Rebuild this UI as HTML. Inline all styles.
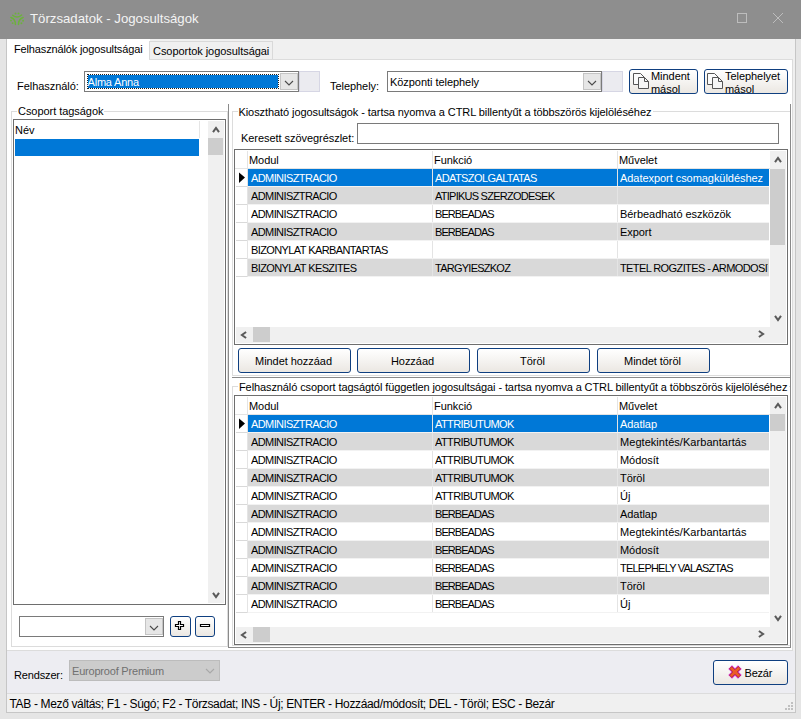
<!DOCTYPE html>
<html><head><meta charset="utf-8"><style>
html,body{margin:0;padding:0;}
body{width:801px;height:719px;overflow:hidden;position:relative;background:#e5e5e5;font-family:"Liberation Sans",sans-serif;}
div,span,svg{position:absolute;}
.t{font-size:11px;line-height:13px;white-space:pre;color:#000;letter-spacing:-0.05px}
.u{letter-spacing:-0.6px}
.w{color:#fff}
</style></head><body>

<div style="left:0px;top:0px;width:801px;height:39px;background:#8e8e8e"></div>
<svg style="left:6px;top:8px" width="22" height="22" viewBox="6 8 22 22">
<g fill="none" stroke="#6cb23c" stroke-width="1.5" stroke-linecap="round">
<path d="M12.7,15.2 Q17,19 21.6,15"/>
<path d="M10.9,17.5 Q15.5,19 15.4,24.5"/>
<path d="M23.1,17.5 Q18.5,19 18.5,24.5"/>
</g>
<g fill="#6cb23c"><circle cx="15.5" cy="13.5" r="0.95"/><circle cx="18.5" cy="13.5" r="0.95"/><circle cx="11" cy="20.6" r="0.95"/><circle cx="23.1" cy="20.7" r="0.95"/><circle cx="12.6" cy="23.1" r="0.95"/><circle cx="21.4" cy="23.3" r="0.95"/></g>
</svg>
<span class="t" style="left:30px;top:10px;font-size:13.2px;line-height:17px;color:#f4f4f4;letter-spacing:0px">Törzsadatok - Jogosultságok</span>
<div style="left:737px;top:13px;width:10px;height:10px;border:1px solid #bdbdbd;box-sizing:border-box;"></div>
<svg style="left:772px;top:12px" width="12" height="12" viewBox="0 0 12 12"><path d="M1,1 L11,11 M11,1 L1,11" stroke="#bdbdbd" stroke-width="1"/></svg>
<div style="left:6px;top:39px;width:1px;height:674px;background:#c6c6c6"></div>
<div style="left:795px;top:39px;width:1px;height:674px;background:#c6c6c6"></div>
<div style="left:6px;top:712px;width:790px;height:1px;background:#c6c6c6"></div>
<div style="left:7px;top:39px;width:788px;height:673px;background:#f0f0f0"></div>
<div style="left:7px;top:39px;width:143px;height:22px;background:#ffffff"></div>
<div style="left:149px;top:41px;width:124px;height:18px;background:#f0f0f0;border:1px solid #d9d9d9;border-bottom:none;box-sizing:border-box"></div>
<span class="t " style="left:14px;top:43px;letter-spacing:-0.14px">Felhasználók jogosultságai</span>
<span class="t " style="left:153px;top:45px;">Csoportok jogosultságai</span>
<div style="left:7px;top:60px;width:786px;height:591px;background:#ffffff"></div>
<div style="left:149px;top:59px;width:644px;height:1px;background:#dcdcdc"></div>
<div style="left:792px;top:59px;width:1px;height:592px;background:#dcdcdc"></div>
<div style="left:7px;top:650px;width:786px;height:1px;background:#dcdcdc"></div>
<span class="t " style="left:17px;top:80px;">Felhasználó:</span>
<div style="left:84px;top:71px;width:215px;height:21px;border:1px solid #7a7a7a;box-sizing:border-box;background:#ffffff;"></div>
<div style="left:88px;top:75px;width:190px;height:13px;background:#0078d7"></div>
<div style="left:87px;top:74px;width:192px;height:15px;border:1px dotted #202020;box-sizing:border-box"></div>
<span class="t w" style="left:87.5px;top:76px;letter-spacing:-0.2px">Alma Anna</span>
<div style="left:280px;top:73px;width:18px;height:17px;border:1px solid #c4c4c4;box-sizing:border-box;background:#e6e6e6;"></div>
<svg style="position:absolute;left:280.5px;top:74.5px" width="16" height="16" viewBox="-8 -8 16 16"><path d="M-4,-2 L0,2 L4,-2" fill="none" stroke="#4a4a4a" stroke-width="1.1"/></svg>
<div style="left:299px;top:71px;width:21px;height:21px;border:1px solid #d6d6e4;box-sizing:border-box;background:#ebebf0;"></div>
<span class="t " style="left:330px;top:80px;">Telephely:</span>
<div style="left:387px;top:71px;width:215px;height:21px;border:1px solid #7a7a7a;box-sizing:border-box;background:#ffffff;"></div>
<span class="t " style="left:390px;top:76px;">Központi telephely</span>
<div style="left:583px;top:73px;width:18px;height:17px;border:1px solid #c4c4c4;box-sizing:border-box;background:#e6e6e6;"></div>
<svg style="position:absolute;left:583.5px;top:74.5px" width="16" height="16" viewBox="-8 -8 16 16"><path d="M-4,-2 L0,2 L4,-2" fill="none" stroke="#4a4a4a" stroke-width="1.1"/></svg>
<div style="left:602px;top:71px;width:21px;height:21px;border:1px solid #d6d6e4;box-sizing:border-box;background:#ebebf0;"></div>
<div style="left:629px;top:69px;width:69px;height:25px;border:1px solid #0f3f80;border-radius:3px;box-sizing:border-box;background:linear-gradient(#ffffff,#f3f1ee 60%,#ebe7e2)"></div>
<svg style="left:633px;top:73px" width="17" height="17" viewBox="0 0 17 17">
<path d="M0.5,0.5 H7.5 L11.5,4.5 V11.5 H0.5 Z" fill="#fbfbfb" stroke="#555" stroke-width="1"/>
<path d="M5.5,4.5 H11.5 L15.5,8.5 V15.5 H5.5 Z" fill="#f6f6f6" stroke="#555" stroke-width="1"/>
<path d="M11.5,4.5 V8.5 H15.5" fill="none" stroke="#555" stroke-width="1"/>
</svg>
<div style="left:630px;top:70px;width:66px;height:23px;overflow:hidden"><span class="t" style="left:21px;top:0px;line-height:12px">Mindent</span><span class="t" style="left:21px;top:13px;line-height:12px">másol</span></div>
<div style="left:704px;top:69px;width:84px;height:25px;border:1px solid #0f3f80;border-radius:3px;box-sizing:border-box;background:linear-gradient(#ffffff,#f3f1ee 60%,#ebe7e2)"></div>
<svg style="left:707px;top:73px" width="17" height="17" viewBox="0 0 17 17">
<path d="M0.5,0.5 H7.5 L11.5,4.5 V11.5 H0.5 Z" fill="#fbfbfb" stroke="#555" stroke-width="1"/>
<path d="M5.5,4.5 H11.5 L15.5,8.5 V15.5 H5.5 Z" fill="#f6f6f6" stroke="#555" stroke-width="1"/>
<path d="M11.5,4.5 V8.5 H15.5" fill="none" stroke="#555" stroke-width="1"/>
</svg>
<div style="left:705px;top:70px;width:81px;height:23px;overflow:hidden"><span class="t" style="left:20px;top:0px;line-height:12px">Telephelyet</span><span class="t" style="left:20px;top:13px;line-height:12px">másol</span></div>
<div style="left:11px;top:111px;width:217px;height:1px;background:#dcdcdc"></div>
<div style="left:11px;top:111px;width:1px;height:536px;background:#dcdcdc"></div>
<div style="left:227px;top:111px;width:1px;height:536px;background:#dcdcdc"></div>
<div style="left:11px;top:646px;width:217px;height:1px;background:#dcdcdc"></div>
<div style="left:17px;top:104px;width:87px;height:14px;background:#ffffff"></div>
<span class="t " style="left:18px;top:105px;">Csoport tagságok</span>
<div style="left:13px;top:119px;width:213px;height:486px;border:1px solid #6e6e6e;box-sizing:border-box;background:#ffffff;"></div>
<div style="left:199px;top:121px;width:1px;height:17px;background:#e5e5e5"></div>
<span class="t " style="left:15px;top:124px;">Név</span>
<div style="left:15px;top:139px;width:184px;height:17px;background:#0078d7"></div>
<div style="left:208px;top:121px;width:16px;height:482px;background:#f0f0f0"></div>
<svg style="position:absolute;left:207.5px;top:122px" width="16" height="16" viewBox="-8 -8 16 16"><path d="M-3,2.1 L0,-2.1 L3,2.1" fill="none" stroke="#5a5a5a" stroke-width="2"/></svg>
<div style="left:208px;top:138px;width:15px;height:17px;background:#cdcdcd"></div>
<svg style="position:absolute;left:207.5px;top:587px" width="16" height="16" viewBox="-8 -8 16 16"><path d="M-3,-2.1 L0,2.1 L3,-2.1" fill="none" stroke="#5a5a5a" stroke-width="2"/></svg>
<div style="left:19px;top:616px;width:145px;height:21px;border:1px solid #7a7a7a;box-sizing:border-box;background:#ffffff;"></div>
<div style="left:145px;top:618px;width:18px;height:17px;border:1px solid #c4c4c4;box-sizing:border-box;background:#e6e6e6;"></div>
<svg style="position:absolute;left:145.5px;top:619.5px" width="16" height="16" viewBox="-8 -8 16 16"><path d="M-4,-2 L0,2 L4,-2" fill="none" stroke="#4a4a4a" stroke-width="1.1"/></svg>
<div style="left:170px;top:616px;width:21px;height:21px;border:1px solid #0f3f80;border-radius:3px;box-sizing:border-box;background:linear-gradient(#ffffff,#f3f1ee 60%,#ebe7e2)"></div>
<svg style="left:174px;top:620px" width="12" height="12" viewBox="0 0 12 12"><path d="M4.5,1.5 H6.5 V4.5 H9.5 V6.5 H6.5 V9.5 H4.5 V6.5 H1.5 V4.5 H4.5 Z" fill="#fff" stroke="#000" stroke-width="1.2"/></svg>
<div style="left:195px;top:616px;width:20px;height:21px;border:1px solid #0f3f80;border-radius:3px;box-sizing:border-box;background:linear-gradient(#ffffff,#f3f1ee 60%,#ebe7e2)"></div>
<svg style="left:199px;top:620px" width="12" height="12" viewBox="0 0 12 12"><path d="M1.5,4.5 H10.5 V6.5 H1.5 Z" fill="#fff" stroke="#000" stroke-width="1.2"/></svg>
<div style="left:228px;top:104px;width:1px;height:544px;background:#8a8a8a"></div>
<div style="left:790px;top:104px;width:1px;height:544px;background:#8a8a8a"></div>
<div style="left:228px;top:647px;width:563px;height:1px;background:#8a8a8a"></div>
<div style="left:232px;top:111px;width:558px;height:1px;background:#dcdcdc"></div>
<div style="left:232px;top:111px;width:1px;height:265px;background:#dcdcdc"></div>
<div style="left:232px;top:375px;width:558px;height:1px;background:#dcdcdc"></div>
<div style="left:232px;top:377px;width:559px;height:1px;background:#8a8a8a"></div>
<div style="left:238px;top:104px;width:415px;height:14px;background:#ffffff"></div>
<span class="t " style="left:238.5px;top:106px;letter-spacing:-0.08px">Kiosztható jogosultságok - tartsa nyomva a CTRL billentyűt a többszörös kijelöléséhez</span>
<span class="t " style="left:241px;top:132px;">Keresett szövegrészlet:</span>
<div style="left:357px;top:123px;width:422px;height:21px;border:1px solid #7a7a7a;box-sizing:border-box;background:#ffffff;"></div>
<div style="left:234px;top:149px;width:554px;height:196px;border:1px solid #6e6e6e;box-sizing:border-box;background:#ffffff;"></div>
<div style="left:235px;top:168px;width:535px;height:1px;background:#e4e4e4"></div>
<div style="left:247px;top:151px;width:1px;height:126px;background:#e4e4e4"></div>
<div style="left:432px;top:151px;width:1px;height:126px;background:#e4e4e4"></div>
<div style="left:617px;top:151px;width:1px;height:126px;background:#e4e4e4"></div>
<span class="t " style="left:249px;top:154px;">Modul</span>
<span class="t " style="left:434px;top:154px;">Funkció</span>
<span class="t " style="left:619px;top:154px;">Művelet</span>
<div style="left:248px;top:169px;width:184px;height:17px;background:#0078d7"></div>
<div style="left:433px;top:169px;width:184px;height:17px;background:#0078d7"></div>
<div style="left:618px;top:169px;width:151px;height:17px;background:#0078d7"></div>
<div style="left:248px;top:186px;width:521px;height:1px;background:#f2f2f2"></div>
<div style="left:236px;top:186px;width:11px;height:1px;background:#d9d9d9"></div>
<svg style="left:238px;top:172px" width="8" height="12" viewBox="0 0 8 12"><path d="M1,0.5 L7,5.5 L1,11 Z" fill="#000"/></svg>
<div style="left:251px;top:169px;width:180px;height:17px;overflow:hidden"><span class="t w u" style="left:0px;top:3px;">ADMINISZTRACIO</span></div>
<div style="left:435px;top:169px;width:181px;height:17px;overflow:hidden"><span class="t w u" style="left:0px;top:3px;">ADATSZOLGALTATAS</span></div>
<div style="left:620px;top:169px;width:148px;height:17px;overflow:hidden"><span class="t w" style="left:0px;top:3px;">Adatexport csomagküldéshez</span></div>
<div style="left:248px;top:187px;width:184px;height:17px;background:#d9d9d9"></div>
<div style="left:433px;top:187px;width:184px;height:17px;background:#d9d9d9"></div>
<div style="left:618px;top:187px;width:151px;height:17px;background:#d9d9d9"></div>
<div style="left:248px;top:204px;width:521px;height:1px;background:#f2f2f2"></div>
<div style="left:236px;top:204px;width:11px;height:1px;background:#d9d9d9"></div>
<div style="left:251px;top:187px;width:180px;height:17px;overflow:hidden"><span class="t  u" style="left:0px;top:3px;">ADMINISZTRACIO</span></div>
<div style="left:435px;top:187px;width:181px;height:17px;overflow:hidden"><span class="t  u" style="left:0px;top:3px;letter-spacing:-0.75px;">ATIPIKUS SZERZODESEK</span></div>
<div style="left:248px;top:222px;width:521px;height:1px;background:#f2f2f2"></div>
<div style="left:236px;top:222px;width:11px;height:1px;background:#d9d9d9"></div>
<div style="left:251px;top:205px;width:180px;height:17px;overflow:hidden"><span class="t  u" style="left:0px;top:3px;">ADMINISZTRACIO</span></div>
<div style="left:435px;top:205px;width:181px;height:17px;overflow:hidden"><span class="t  u" style="left:0px;top:3px;letter-spacing:-0.95px;">BERBEADAS</span></div>
<div style="left:620px;top:205px;width:148px;height:17px;overflow:hidden"><span class="t " style="left:0px;top:3px;">Bérbeadható eszközök</span></div>
<div style="left:248px;top:223px;width:184px;height:17px;background:#d9d9d9"></div>
<div style="left:433px;top:223px;width:184px;height:17px;background:#d9d9d9"></div>
<div style="left:618px;top:223px;width:151px;height:17px;background:#d9d9d9"></div>
<div style="left:248px;top:240px;width:521px;height:1px;background:#f2f2f2"></div>
<div style="left:236px;top:240px;width:11px;height:1px;background:#d9d9d9"></div>
<div style="left:251px;top:223px;width:180px;height:17px;overflow:hidden"><span class="t  u" style="left:0px;top:3px;">ADMINISZTRACIO</span></div>
<div style="left:435px;top:223px;width:181px;height:17px;overflow:hidden"><span class="t  u" style="left:0px;top:3px;letter-spacing:-0.95px;">BERBEADAS</span></div>
<div style="left:620px;top:223px;width:148px;height:17px;overflow:hidden"><span class="t " style="left:0px;top:3px;">Export</span></div>
<div style="left:248px;top:258px;width:521px;height:1px;background:#f2f2f2"></div>
<div style="left:236px;top:258px;width:11px;height:1px;background:#d9d9d9"></div>
<div style="left:251px;top:241px;width:180px;height:17px;overflow:hidden"><span class="t  u" style="left:0px;top:3px;">BIZONYLAT KARBANTARTAS</span></div>
<div style="left:248px;top:259px;width:184px;height:17px;background:#d9d9d9"></div>
<div style="left:433px;top:259px;width:184px;height:17px;background:#d9d9d9"></div>
<div style="left:618px;top:259px;width:151px;height:17px;background:#d9d9d9"></div>
<div style="left:248px;top:276px;width:521px;height:1px;background:#f2f2f2"></div>
<div style="left:236px;top:276px;width:11px;height:1px;background:#d9d9d9"></div>
<div style="left:251px;top:259px;width:180px;height:17px;overflow:hidden"><span class="t  u" style="left:0px;top:3px;">BIZONYLAT KESZITES</span></div>
<div style="left:435px;top:259px;width:181px;height:17px;overflow:hidden"><span class="t  u" style="left:0px;top:3px;letter-spacing:-0.75px;">TARGYIESZKOZ</span></div>
<div style="left:620px;top:259px;width:148px;height:17px;overflow:hidden"><span class="t  u" style="left:0px;top:3px;">TETEL ROGZITES - ARMODOSITAS</span></div>
<div style="left:770px;top:151px;width:16px;height:176px;background:#f0f0f0"></div>
<svg style="position:absolute;left:769.5px;top:152px" width="16" height="16" viewBox="-8 -8 16 16"><path d="M-3,2.1 L0,-2.1 L3,2.1" fill="none" stroke="#5a5a5a" stroke-width="2"/></svg>
<div style="left:770px;top:169px;width:15px;height:76px;background:#cdcdcd"></div>
<svg style="position:absolute;left:769.5px;top:309.5px" width="16" height="16" viewBox="-8 -8 16 16"><path d="M-3,-2.1 L0,2.1 L3,-2.1" fill="none" stroke="#5a5a5a" stroke-width="2"/></svg>
<div style="left:236px;top:327px;width:550px;height:16px;background:#f0f0f0"></div>
<svg style="position:absolute;left:236px;top:326.5px" width="16" height="16" viewBox="-8 -8 16 16"><path d="M2.1,-3 L-2.1,0 L2.1,3" fill="none" stroke="#5a5a5a" stroke-width="2"/></svg>
<div style="left:253px;top:327px;width:17px;height:15px;background:#cdcdcd"></div>
<svg style="position:absolute;left:753px;top:326px" width="16" height="16" viewBox="-8 -8 16 16"><path d="M-2.1,-3 L2.1,0 L-2.1,3" fill="none" stroke="#5a5a5a" stroke-width="2"/></svg>
<div style="left:238px;top:348px;width:113px;height:25px;border:1px solid #0f3f80;border-radius:3px;box-sizing:border-box;background:linear-gradient(#ffffff,#f3f1ee 60%,#ebe7e2)"></div>
<div class="t" style="left:237px;top:355px;width:113px;text-align:center">Mindet hozzáad</div>
<div style="left:357px;top:348px;width:113px;height:25px;border:1px solid #0f3f80;border-radius:3px;box-sizing:border-box;background:linear-gradient(#ffffff,#f3f1ee 60%,#ebe7e2)"></div>
<div class="t" style="left:356px;top:355px;width:113px;text-align:center">Hozzáad</div>
<div style="left:477px;top:348px;width:113px;height:25px;border:1px solid #0f3f80;border-radius:3px;box-sizing:border-box;background:linear-gradient(#ffffff,#f3f1ee 60%,#ebe7e2)"></div>
<div class="t" style="left:476px;top:355px;width:113px;text-align:center">Töröl</div>
<div style="left:597px;top:348px;width:113px;height:25px;border:1px solid #0f3f80;border-radius:3px;box-sizing:border-box;background:linear-gradient(#ffffff,#f3f1ee 60%,#ebe7e2)"></div>
<div class="t" style="left:596px;top:355px;width:113px;text-align:center">Mindet töröl</div>
<div style="left:232px;top:386px;width:558px;height:1px;background:#dcdcdc"></div>
<div style="left:232px;top:386px;width:1px;height:260px;background:#dcdcdc"></div>
<div style="left:232px;top:645px;width:558px;height:1px;background:#dcdcdc"></div>
<div style="left:238px;top:380px;width:551px;height:14px;background:#ffffff"></div>
<span class="t " style="left:239px;top:381px;letter-spacing:-0.1px">Felhasználó csoport tagságtól független jogosultságai - tartsa nyomva a CTRL billentyűt a többszörös kijelöléséhez</span>
<div style="left:234px;top:395px;width:554px;height:250px;border:1px solid #6e6e6e;box-sizing:border-box;background:#ffffff;"></div>
<div style="left:235px;top:414px;width:535px;height:1px;background:#e4e4e4"></div>
<div style="left:247px;top:397px;width:1px;height:216px;background:#e4e4e4"></div>
<div style="left:432px;top:397px;width:1px;height:216px;background:#e4e4e4"></div>
<div style="left:617px;top:397px;width:1px;height:216px;background:#e4e4e4"></div>
<span class="t " style="left:249px;top:400px;">Modul</span>
<span class="t " style="left:434px;top:400px;">Funkció</span>
<span class="t " style="left:619px;top:400px;">Művelet</span>
<div style="left:248px;top:415px;width:184px;height:17px;background:#0078d7"></div>
<div style="left:433px;top:415px;width:184px;height:17px;background:#0078d7"></div>
<div style="left:618px;top:415px;width:151px;height:17px;background:#0078d7"></div>
<div style="left:248px;top:432px;width:521px;height:1px;background:#f2f2f2"></div>
<div style="left:236px;top:432px;width:11px;height:1px;background:#d9d9d9"></div>
<svg style="left:238px;top:418px" width="8" height="12" viewBox="0 0 8 12"><path d="M1,0.5 L7,5.5 L1,11 Z" fill="#000"/></svg>
<div style="left:251px;top:415px;width:180px;height:17px;overflow:hidden"><span class="t w u" style="left:0px;top:3px;">ADMINISZTRACIO</span></div>
<div style="left:435px;top:415px;width:181px;height:17px;overflow:hidden"><span class="t w u" style="left:0px;top:3px;">ATTRIBUTUMOK</span></div>
<div style="left:620px;top:415px;width:148px;height:17px;overflow:hidden"><span class="t w" style="left:0px;top:3px;">Adatlap</span></div>
<div style="left:248px;top:433px;width:184px;height:17px;background:#d9d9d9"></div>
<div style="left:433px;top:433px;width:184px;height:17px;background:#d9d9d9"></div>
<div style="left:618px;top:433px;width:151px;height:17px;background:#d9d9d9"></div>
<div style="left:248px;top:450px;width:521px;height:1px;background:#f2f2f2"></div>
<div style="left:236px;top:450px;width:11px;height:1px;background:#d9d9d9"></div>
<div style="left:251px;top:433px;width:180px;height:17px;overflow:hidden"><span class="t  u" style="left:0px;top:3px;">ADMINISZTRACIO</span></div>
<div style="left:435px;top:433px;width:181px;height:17px;overflow:hidden"><span class="t  u" style="left:0px;top:3px;">ATTRIBUTUMOK</span></div>
<div style="left:620px;top:433px;width:148px;height:17px;overflow:hidden"><span class="t " style="left:0px;top:3px;letter-spacing:0.05px;">Megtekintés/Karbantartás</span></div>
<div style="left:248px;top:468px;width:521px;height:1px;background:#f2f2f2"></div>
<div style="left:236px;top:468px;width:11px;height:1px;background:#d9d9d9"></div>
<div style="left:251px;top:451px;width:180px;height:17px;overflow:hidden"><span class="t  u" style="left:0px;top:3px;">ADMINISZTRACIO</span></div>
<div style="left:435px;top:451px;width:181px;height:17px;overflow:hidden"><span class="t  u" style="left:0px;top:3px;">ATTRIBUTUMOK</span></div>
<div style="left:620px;top:451px;width:148px;height:17px;overflow:hidden"><span class="t " style="left:0px;top:3px;">Módosít</span></div>
<div style="left:248px;top:469px;width:184px;height:17px;background:#d9d9d9"></div>
<div style="left:433px;top:469px;width:184px;height:17px;background:#d9d9d9"></div>
<div style="left:618px;top:469px;width:151px;height:17px;background:#d9d9d9"></div>
<div style="left:248px;top:486px;width:521px;height:1px;background:#f2f2f2"></div>
<div style="left:236px;top:486px;width:11px;height:1px;background:#d9d9d9"></div>
<div style="left:251px;top:469px;width:180px;height:17px;overflow:hidden"><span class="t  u" style="left:0px;top:3px;">ADMINISZTRACIO</span></div>
<div style="left:435px;top:469px;width:181px;height:17px;overflow:hidden"><span class="t  u" style="left:0px;top:3px;">ATTRIBUTUMOK</span></div>
<div style="left:620px;top:469px;width:148px;height:17px;overflow:hidden"><span class="t " style="left:0px;top:3px;">Töröl</span></div>
<div style="left:248px;top:504px;width:521px;height:1px;background:#f2f2f2"></div>
<div style="left:236px;top:504px;width:11px;height:1px;background:#d9d9d9"></div>
<div style="left:251px;top:487px;width:180px;height:17px;overflow:hidden"><span class="t  u" style="left:0px;top:3px;">ADMINISZTRACIO</span></div>
<div style="left:435px;top:487px;width:181px;height:17px;overflow:hidden"><span class="t  u" style="left:0px;top:3px;">ATTRIBUTUMOK</span></div>
<div style="left:620px;top:487px;width:148px;height:17px;overflow:hidden"><span class="t " style="left:0px;top:3px;">Új</span></div>
<div style="left:248px;top:505px;width:184px;height:17px;background:#d9d9d9"></div>
<div style="left:433px;top:505px;width:184px;height:17px;background:#d9d9d9"></div>
<div style="left:618px;top:505px;width:151px;height:17px;background:#d9d9d9"></div>
<div style="left:248px;top:522px;width:521px;height:1px;background:#f2f2f2"></div>
<div style="left:236px;top:522px;width:11px;height:1px;background:#d9d9d9"></div>
<div style="left:251px;top:505px;width:180px;height:17px;overflow:hidden"><span class="t  u" style="left:0px;top:3px;">ADMINISZTRACIO</span></div>
<div style="left:435px;top:505px;width:181px;height:17px;overflow:hidden"><span class="t  u" style="left:0px;top:3px;letter-spacing:-0.95px;">BERBEADAS</span></div>
<div style="left:620px;top:505px;width:148px;height:17px;overflow:hidden"><span class="t " style="left:0px;top:3px;">Adatlap</span></div>
<div style="left:248px;top:540px;width:521px;height:1px;background:#f2f2f2"></div>
<div style="left:236px;top:540px;width:11px;height:1px;background:#d9d9d9"></div>
<div style="left:251px;top:523px;width:180px;height:17px;overflow:hidden"><span class="t  u" style="left:0px;top:3px;">ADMINISZTRACIO</span></div>
<div style="left:435px;top:523px;width:181px;height:17px;overflow:hidden"><span class="t  u" style="left:0px;top:3px;letter-spacing:-0.95px;">BERBEADAS</span></div>
<div style="left:620px;top:523px;width:148px;height:17px;overflow:hidden"><span class="t " style="left:0px;top:3px;letter-spacing:0.05px;">Megtekintés/Karbantartás</span></div>
<div style="left:248px;top:541px;width:184px;height:17px;background:#d9d9d9"></div>
<div style="left:433px;top:541px;width:184px;height:17px;background:#d9d9d9"></div>
<div style="left:618px;top:541px;width:151px;height:17px;background:#d9d9d9"></div>
<div style="left:248px;top:558px;width:521px;height:1px;background:#f2f2f2"></div>
<div style="left:236px;top:558px;width:11px;height:1px;background:#d9d9d9"></div>
<div style="left:251px;top:541px;width:180px;height:17px;overflow:hidden"><span class="t  u" style="left:0px;top:3px;">ADMINISZTRACIO</span></div>
<div style="left:435px;top:541px;width:181px;height:17px;overflow:hidden"><span class="t  u" style="left:0px;top:3px;letter-spacing:-0.95px;">BERBEADAS</span></div>
<div style="left:620px;top:541px;width:148px;height:17px;overflow:hidden"><span class="t " style="left:0px;top:3px;">Módosít</span></div>
<div style="left:248px;top:576px;width:521px;height:1px;background:#f2f2f2"></div>
<div style="left:236px;top:576px;width:11px;height:1px;background:#d9d9d9"></div>
<div style="left:251px;top:559px;width:180px;height:17px;overflow:hidden"><span class="t  u" style="left:0px;top:3px;">ADMINISZTRACIO</span></div>
<div style="left:435px;top:559px;width:181px;height:17px;overflow:hidden"><span class="t  u" style="left:0px;top:3px;letter-spacing:-0.95px;">BERBEADAS</span></div>
<div style="left:620px;top:559px;width:148px;height:17px;overflow:hidden"><span class="t  u" style="left:0px;top:3px;letter-spacing:-0.78px;">TELEPHELY VALASZTAS</span></div>
<div style="left:248px;top:577px;width:184px;height:17px;background:#d9d9d9"></div>
<div style="left:433px;top:577px;width:184px;height:17px;background:#d9d9d9"></div>
<div style="left:618px;top:577px;width:151px;height:17px;background:#d9d9d9"></div>
<div style="left:248px;top:594px;width:521px;height:1px;background:#f2f2f2"></div>
<div style="left:236px;top:594px;width:11px;height:1px;background:#d9d9d9"></div>
<div style="left:251px;top:577px;width:180px;height:17px;overflow:hidden"><span class="t  u" style="left:0px;top:3px;">ADMINISZTRACIO</span></div>
<div style="left:435px;top:577px;width:181px;height:17px;overflow:hidden"><span class="t  u" style="left:0px;top:3px;letter-spacing:-0.95px;">BERBEADAS</span></div>
<div style="left:620px;top:577px;width:148px;height:17px;overflow:hidden"><span class="t " style="left:0px;top:3px;">Töröl</span></div>
<div style="left:248px;top:612px;width:521px;height:1px;background:#f2f2f2"></div>
<div style="left:236px;top:612px;width:11px;height:1px;background:#d9d9d9"></div>
<div style="left:251px;top:595px;width:180px;height:17px;overflow:hidden"><span class="t  u" style="left:0px;top:3px;">ADMINISZTRACIO</span></div>
<div style="left:435px;top:595px;width:181px;height:17px;overflow:hidden"><span class="t  u" style="left:0px;top:3px;letter-spacing:-0.95px;">BERBEADAS</span></div>
<div style="left:620px;top:595px;width:148px;height:17px;overflow:hidden"><span class="t " style="left:0px;top:3px;">Új</span></div>
<div style="left:770px;top:397px;width:16px;height:230px;background:#f0f0f0"></div>
<svg style="position:absolute;left:769.5px;top:398px" width="16" height="16" viewBox="-8 -8 16 16"><path d="M-3,2.1 L0,-2.1 L3,2.1" fill="none" stroke="#5a5a5a" stroke-width="2"/></svg>
<div style="left:770px;top:414px;width:15px;height:17px;background:#cdcdcd"></div>
<svg style="position:absolute;left:769.5px;top:609.5px" width="16" height="16" viewBox="-8 -8 16 16"><path d="M-3,-2.1 L0,2.1 L3,-2.1" fill="none" stroke="#5a5a5a" stroke-width="2"/></svg>
<div style="left:236px;top:627px;width:550px;height:16px;background:#f0f0f0"></div>
<svg style="position:absolute;left:236px;top:626.5px" width="16" height="16" viewBox="-8 -8 16 16"><path d="M2.1,-3 L-2.1,0 L2.1,3" fill="none" stroke="#5a5a5a" stroke-width="2"/></svg>
<div style="left:253px;top:627px;width:17px;height:15px;background:#cdcdcd"></div>
<svg style="position:absolute;left:753px;top:626px" width="16" height="16" viewBox="-8 -8 16 16"><path d="M-2.1,-3 L2.1,0 L-2.1,3" fill="none" stroke="#5a5a5a" stroke-width="2"/></svg>
<div style="left:7px;top:651px;width:788px;height:42px;background:#ededf2"></div>
<span class="t " style="left:14px;top:669px;letter-spacing:-0.15px">Rendszer:</span>
<div style="left:69px;top:660px;width:151px;height:21px;border:1px solid #bcbcbc;box-sizing:border-box;background:#cccccc;"></div>
<span class="t " style="left:72px;top:665px;color:#707070;letter-spacing:-0.2px">Europroof Premium</span>
<svg style="position:absolute;left:201.5px;top:663px" width="16" height="16" viewBox="-8 -8 16 16"><path d="M-4,-2 L0,2 L4,-2" fill="none" stroke="#a8a8a8" stroke-width="1.1"/></svg>
<div style="left:713px;top:660px;width:75px;height:25px;border:1px solid #0f3f80;border-radius:3px;box-sizing:border-box;background:linear-gradient(#ffffff,#f3f1ee 60%,#ebe7e2)"></div>
<svg style="left:725.4px;top:662.3px" width="20" height="20" viewBox="-10 -10 20 20">
<path d="M-6.70,-3.00 L-3.00,-6.70 L0.00,-3.70 L3.00,-6.70 L6.70,-3.00 L3.70,0.00 L6.70,3.00 L3.00,6.70 L0.00,3.70 L-3.00,6.70 L-6.70,3.00 L-3.70,0.00 Z" fill="#e02ee0"/>
<path d="M-5.50,-3.20 L-3.20,-5.50 L0.00,-2.30 L3.20,-5.50 L5.50,-3.20 L2.30,0.00 L5.50,3.20 L3.20,5.50 L0.00,2.30 L-3.20,5.50 L-5.50,3.20 L-2.30,0.00 Z" fill="#ec5a26" stroke="#8a2a14" stroke-width="0.6"/>
</svg>
<span class="t " style="left:744.5px;top:667px;letter-spacing:-0.2px">Bezár</span>
<div style="left:7px;top:693px;width:788px;height:1px;background:#dcdcdc"></div>
<div style="left:7px;top:694px;width:788px;height:18px;background:#f0f0f0"></div>
<span class="t" style="left:9.5px;top:698px;font-size:12px;letter-spacing:-0.35px">TAB - Mező váltás; F1 - Súgó; F2 - Törzsadat; INS - Új; ENTER - Hozzáad/módosít; DEL - Töröl; ESC - Bezár</span>
<div style="left:791px;top:702px;width:2px;height:2px;background:#c0c0c0"></div>
<div style="left:788px;top:705px;width:2px;height:2px;background:#c0c0c0"></div>
<div style="left:791px;top:705px;width:2px;height:2px;background:#c0c0c0"></div>
<div style="left:785px;top:708px;width:2px;height:2px;background:#c0c0c0"></div>
<div style="left:788px;top:708px;width:2px;height:2px;background:#c0c0c0"></div>
<div style="left:791px;top:708px;width:2px;height:2px;background:#c0c0c0"></div>
</body></html>
